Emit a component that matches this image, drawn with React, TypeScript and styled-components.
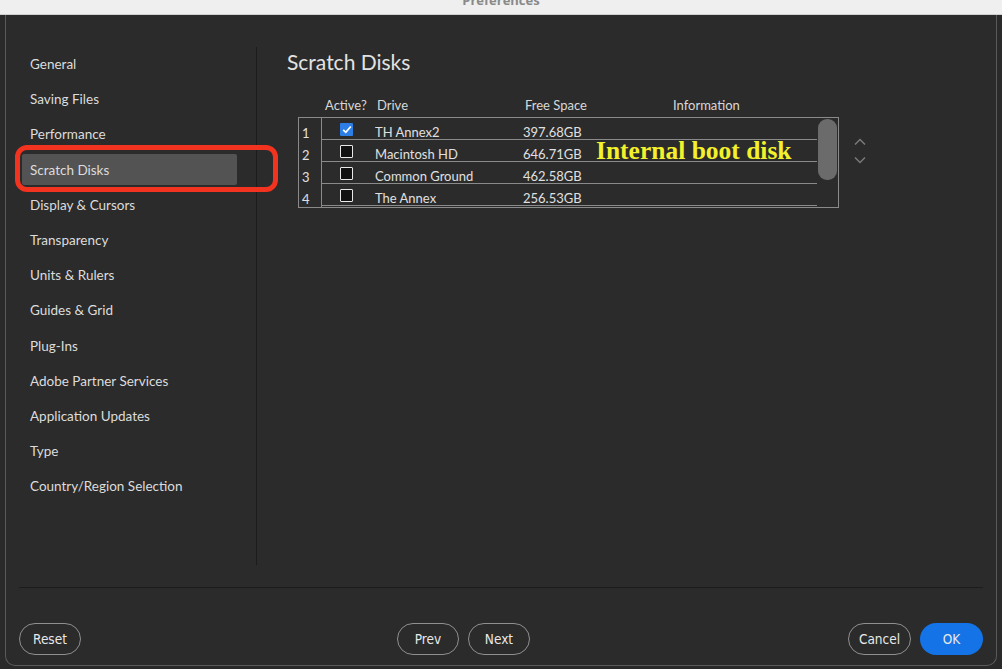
import React from "react";
import styled, { createGlobalStyle } from "styled-components";

const GlobalStyle = createGlobalStyle`
  html, body { margin: 0; padding: 0; background: #2a2a2a; }
  body { font-family: Lato, "Open Sans", sans-serif; }
  * { box-sizing: border-box; }
`;

const Window = styled.div`
  position: relative;
  width: 1002px;
  height: 669px;
  display: flex;
  flex-direction: column;
  overflow: hidden;
  background: #2a2a2a;
`;

const TitleBar = styled.div`
  height: 15px;
  background: #efefef;
  border-bottom: 1px solid #d0d0d0;
  overflow: hidden;
  display: flex;
  justify-content: center;
`;

const TitleText = styled.span`
  font-family: "Open Sans", sans-serif;
  font-weight: 700;
  font-size: 13px;
  line-height: 14px;
  color: #8a8a8a;
  transform: translateY(-7px);
`;

const Dialog = styled.div`
  flex: 1;
  margin: 0 5px 3px 5px;
  background: #2b2b2b;
  border: 1px solid #5a5a5a;
  border-top: none;
  border-radius: 0 0 10px 10px;
  display: flex;
  flex-direction: column;
`;

const Body = styled.div`
  display: flex;
  height: 572px;
  padding: 32px 0 22px;
`;

const Sidebar = styled.nav`
  width: 251px;
  border-right: 1px solid #1c1c1c;
  padding: 1.5px 0 0 16px;
  display: flex;
  flex-direction: column;
  gap: 4.2px;
`;

const NavItem = styled.div<{ $active?: boolean }>`
  width: 215px;
  height: 31px;
  display: flex;
  align-items: center;
  padding-left: 8px;
  font-size: 13.5px;
  color: #dcdcdc;
  background: ${(p) => (p.$active ? "#535353" : "transparent")};
  border-radius: 2px;
`;

const Content = styled.section`
  flex: 1;
  padding-left: 30px;
`;

const Heading = styled.h1`
  margin: 0;
  font-weight: 400;
  font-size: 21px;
  line-height: 30px;
  color: #e2e2e2;
`;

const TableArea = styled.div`
  margin: 19px 0 0 11px;
  display: flex;
  align-items: flex-start;
  gap: 15px;
`;

const TableWrap = styled.div`
  width: 541px;
`;

const HeaderRow = styled.div`
  display: grid;
  grid-template-columns: 52px 148px 148px 1fr;
  padding-left: 27px;
  height: 18px;
  align-items: center;
  font-size: 13px;
  color: #d8d8d8;
  margin-bottom: 3px;
`;

const TableBox = styled.div`
  height: 91px;
  border: 1px solid #8a8a8a;
  display: flex;
`;

const NumCol = styled.div`
  width: 23px;
  border-right: 1px solid #8a8a8a;
  display: flex;
  flex-direction: column;
`;

const NumCell = styled.div`
  height: 22px;
  padding: 8px 0 0 3px;
  font-size: 13px;
  line-height: 15px;
  color: #e0e0e0;
`;

const Rows = styled.div`
  flex: 1;
  display: flex;
  flex-direction: column;
`;

const Row = styled.div`
  height: 22px;
  border-bottom: 1px solid #8a8a8a;
  display: grid;
  grid-template-columns: 53px 148px 73px 1fr;
  align-items: end;
  font-size: 13px;
  color: #e0e0e0;
  position: relative;
`;

const CheckCell = styled.div`
  padding-left: 18px;
  display: flex;
  align-items: flex-end;
  height: 100%;
  padding-bottom: 3px;
`;

const Box = styled.div<{ $checked?: boolean }>`
  width: 13px;
  height: 13px;
  border-radius: 1px;
  background: ${(p) => (p.$checked ? "#2d7fe6" : "#111")};
  border: ${(p) => (p.$checked ? "none" : "1.5px solid #e8e8e8")};
  display: flex;
  align-items: center;
  justify-content: center;
`;

const Cell = styled.div`
  line-height: 14px;
  white-space: nowrap;
`;

const Note = styled.span`
  position: absolute;
  left: 274px;
  top: -3px;
  font-family: "Liberation Serif", serif;
  font-weight: 700;
  font-size: 25.5px;
  line-height: 28px;
  color: #f3f02c;
  white-space: nowrap;
`;

const ScrollCol = styled.div`
  width: 21px;
  padding: 1px 0 0 1px;
`;

const Thumb = styled.div`
  width: 19px;
  height: 61px;
  border-radius: 9px;
  background: #6b6b6b;
`;

const Stepper = styled.div`
  margin-top: 42px;
  display: flex;
  flex-direction: column;
  gap: 10px;
`;

const Footer = styled.footer`
  margin: 0 13px;
  border-top: 1px solid #1c1c1c;
  padding-top: 35px;
  display: flex;
  align-items: center;
`;

const Btn = styled.button<{ $primary?: boolean; $w?: number }>`
  width: ${(p) => p.$w ?? 62}px;
  height: 32px;
  border-radius: 16px;
  border: ${(p) => (p.$primary ? "none" : "1.5px solid #8f8f8f")};
  background: ${(p) => (p.$primary ? "#1473e6" : "transparent")};
  color: #e8e8e8;
  font-family: "DejaVu Sans Condensed", "Liberation Sans Narrow", Roboto, sans-serif;
  font-size: 13.5px;
  padding: 0;
  display: flex;
  align-items: center;
  justify-content: center;
`;

const BtnGroup = styled.div<{ $ml?: string }>`
  display: flex;
  gap: 9px;
  margin-left: ${(p) => p.$ml ?? "0"};
`;

const Annotation = styled.div`
  position: absolute;
  left: 15px;
  top: 145px;
  width: 263px;
  height: 47px;
  border: 5px solid #f2331f;
  border-radius: 12px;
  pointer-events: none;
`;

const Chevron = ({ up }: { up?: boolean }) => (
  <svg width="12" height="8" viewBox="0 0 12 8">
    <path
      d={up ? "M1 6.5 L6 1.5 L11 6.5" : "M1 1.5 L6 6.5 L11 1.5"}
      fill="none"
      stroke="#7a7a7a"
      strokeWidth="1.5"
    />
  </svg>
);

const Check = () => (
  <svg width="10" height="9" viewBox="0 0 10 9">
    <path d="M1.2 4.8 L3.8 7.3 L8.8 1.5" fill="none" stroke="#fff" strokeWidth="1.8" />
  </svg>
);

const navItems = [
  "General",
  "Saving Files",
  "Performance",
  "Scratch Disks",
  "Display & Cursors",
  "Transparency",
  "Units & Rulers",
  "Guides & Grid",
  "Plug-Ins",
  "Adobe Partner Services",
  "Application Updates",
  "Type",
  "Country/Region Selection",
];

const disks = [
  { name: "TH Annex2", free: "397.68GB", active: true },
  { name: "Macintosh HD", free: "646.71GB", active: false, note: "Internal boot disk" },
  { name: "Common Ground", free: "462.58GB", active: false },
  { name: "The Annex", free: "256.53GB", active: false },
];

export default function App() {
  return (
    <Window>
      <GlobalStyle />
      <TitleBar>
        <TitleText>Preferences</TitleText>
      </TitleBar>
      <Dialog>
        <Body>
          <Sidebar>
            {navItems.map((n) => (
              <NavItem key={n} $active={n === "Scratch Disks"}>
                {n}
              </NavItem>
            ))}
          </Sidebar>
          <Content>
            <Heading>Scratch Disks</Heading>
            <TableArea>
              <TableWrap>
                <HeaderRow>
                  <span>Active?</span>
                  <span>Drive</span>
                  <span>Free Space</span>
                  <span>Information</span>
                </HeaderRow>
                <TableBox>
                  <NumCol>
                    {disks.map((_, i) => (
                      <NumCell key={i}>{i + 1}</NumCell>
                    ))}
                  </NumCol>
                  <Rows>
                    {disks.map((d) => (
                      <Row key={d.name}>
                        <CheckCell>
                          <Box $checked={d.active}>{d.active && <Check />}</Box>
                        </CheckCell>
                        <Cell>{d.name}</Cell>
                        <Cell>{d.free}</Cell>
                        <Cell />
                        {d.note && <Note>{d.note}</Note>}
                      </Row>
                    ))}
                  </Rows>
                  <ScrollCol>
                    <Thumb />
                  </ScrollCol>
                </TableBox>
              </TableWrap>
              <Stepper>
                <Chevron up />
                <Chevron />
              </Stepper>
            </TableArea>
          </Content>
        </Body>
        <Footer>
          <Btn>Reset</Btn>
          <BtnGroup $ml="316px">
            <Btn>Prev</Btn>
            <Btn>Next</Btn>
          </BtnGroup>
          <BtnGroup $ml="auto">
            <Btn $w={63}>Cancel</Btn>
            <Btn $primary $w={63}>OK</Btn>
          </BtnGroup>
        </Footer>
      </Dialog>
      <Annotation />
    </Window>
  );
}
